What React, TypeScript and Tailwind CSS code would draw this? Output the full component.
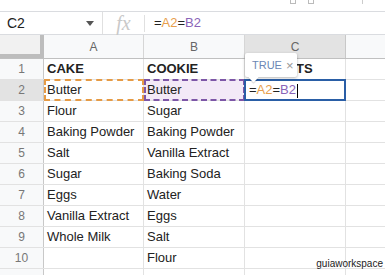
import React from "react";

const colA = ["CAKE", "Butter", "Flour", "Baking Powder", "Salt", "Sugar", "Eggs", "Vanilla Extract", "Whole Milk", ""];
const colB = ["COOKIE", "Butter", "Sugar", "Baking Powder", "Vanilla Extract", "Baking Soda", "Water", "Eggs", "Salt", "Flour"];

function Formula({ caret }: { caret?: boolean }) {
  return (
    <span className="whitespace-nowrap">
      <span className="text-[#222]">=</span>
      <span className="text-[#e8a04c]">A2</span>
      <span className="text-[#222]">=</span>
      <span className="text-[#8a63b8]">B2</span>
      {caret && <span className="inline-block w-px h-[14px] bg-black align-middle ml-px" />}
    </span>
  );
}

export default function App() {
  return (
    <div
      className="relative w-[385px] h-[275px] overflow-hidden bg-white text-[13px] text-[#222]"
      style={{ fontFamily: '"Liberation Sans", Arial, sans-serif' }}
    >
      {/* toolbar edge */}
      <div className="h-[12px] border-b border-[#dadce0] flex items-start gap-3 pl-[290px]">
        <div className="w-[6px] h-[4px] border-x border-b border-[#bbb]" />
        <div className="w-[6px] h-[4px] border-x border-b border-[#bbb]" />
        <div className="ml-[36px] w-px h-[4px] bg-[#ccc]" />
      </div>

      {/* formula bar */}
      <div className="h-[23px] border-b border-[#dadce0] flex items-center">
        <div className="w-[103px] h-full flex items-center justify-between pl-[7px] pr-[8px] border-r border-[#e0e0e0] text-[14px] text-[#222]">
          <span>C2</span>
          <svg viewBox="0 0 8 5" className="w-[8px] h-[5px]" fill="#555">
            <path d="M0 0h8L4 5z" />
          </svg>
        </div>
        <div
          className="w-[42px] h-[17px] flex items-center justify-center border-r border-[#e0e0e0] text-[#c9c9c9] italic text-[20px]"
          style={{ fontFamily: '"Liberation Serif", serif' }}
        >
          fx
        </div>
        <div className="pl-[9px] text-[13px]">
          <Formula />
        </div>
      </div>

      {/* column headers */}
      <div className="flex h-[24px] border-b border-[#c0c0c0] text-[12px] text-[#666]">
        <div className="w-[44px] bg-[#f1f1f1] border-r-4 border-b-4 border-[#bdbdbd]" />
        <div className="w-[100px] bg-[#f8f9fa] border-r border-[#d6d6d6] flex items-center justify-center">A</div>
        <div className="w-[101px] bg-[#f8f9fa] border-r border-[#d6d6d6] flex items-center justify-center">B</div>
        <div className="w-[101px] bg-[#e3e3e3] border-r border-[#c8c8c8] flex items-center justify-center">C</div>
        <div className="flex-1 bg-[#f8f9fa]" />
      </div>

      {/* rows */}
      {Array.from({ length: 11 }).map((_, r) => {
        const a = colA[r] ?? "";
        const b = colB[r] ?? "";
        const bold = r === 0;
        return (
          <div key={r} className="flex h-[21px] border-b border-[#e2e2e2]">
            <div
              className={`w-[44px] flex items-center justify-center text-[12px] text-[#777] border-r border-[#c8c8c8] ${
                r === 1 ? "bg-[#e3e3e3]" : "bg-[#f8f9fa]"
              }`}
            >
              {r < 10 ? r + 1 : ""}
            </div>
            <div className={`relative w-[100px] flex items-center pl-[3px] border-r border-[#e2e2e2] whitespace-nowrap ${bold ? "font-bold" : ""}`}>
              {a}
              {r === 1 && <div className="absolute -inset-y-px left-0 -right-px border-2 border-dashed border-[#e69b45]" />}
            </div>
            <div
              className={`relative w-[101px] flex items-center pl-[3px] border-r border-[#e2e2e2] whitespace-nowrap ${bold ? "font-bold" : ""} ${
                r === 1 ? "bg-[#f3e9f7]" : ""
              }`}
            >
              {b}
              {r === 1 && <div className="absolute -inset-y-px left-0 -right-px border-2 border-dashed border-[#7d56a7]" />}
            </div>
            <div className={`relative w-[101px] flex items-center border-r border-[#e2e2e2] whitespace-nowrap ${bold ? "font-bold pl-[8px]" : "pl-[4px]"}`}>
              {r === 0 && "RESULTS"}
              {r === 1 && (
                <>
                  <Formula caret />
                  <div className="absolute -top-px -bottom-px -left-px -right-px border-2 border-[#2a5ea6]" />
                </>
              )}
            </div>
            <div className="flex-1" />
          </div>
        );
      })}

      {/* TRUE tooltip */}
      <div className="absolute left-[245px] top-[53px] w-[52px] h-[24px] bg-white rounded-[2px] shadow-[0_1px_3px_rgba(0,0,0,0.3)] flex items-center gap-[4px] pl-[7px] text-[11px]">
        <span className="text-[#6b87b5]">TRUE</span>
        <span className="text-[#999] text-[13px] leading-none">×</span>
        <div className="absolute left-[5px] -bottom-[4px] w-[7px] h-[7px] bg-white rotate-45 shadow-[1px_1px_1px_rgba(0,0,0,0.15)]" />
      </div>

      {/* watermark */}
      <div className="absolute right-[2px] bottom-[4px] text-[10px] text-[#222]">guiaworkspace</div>
    </div>
  );
}
